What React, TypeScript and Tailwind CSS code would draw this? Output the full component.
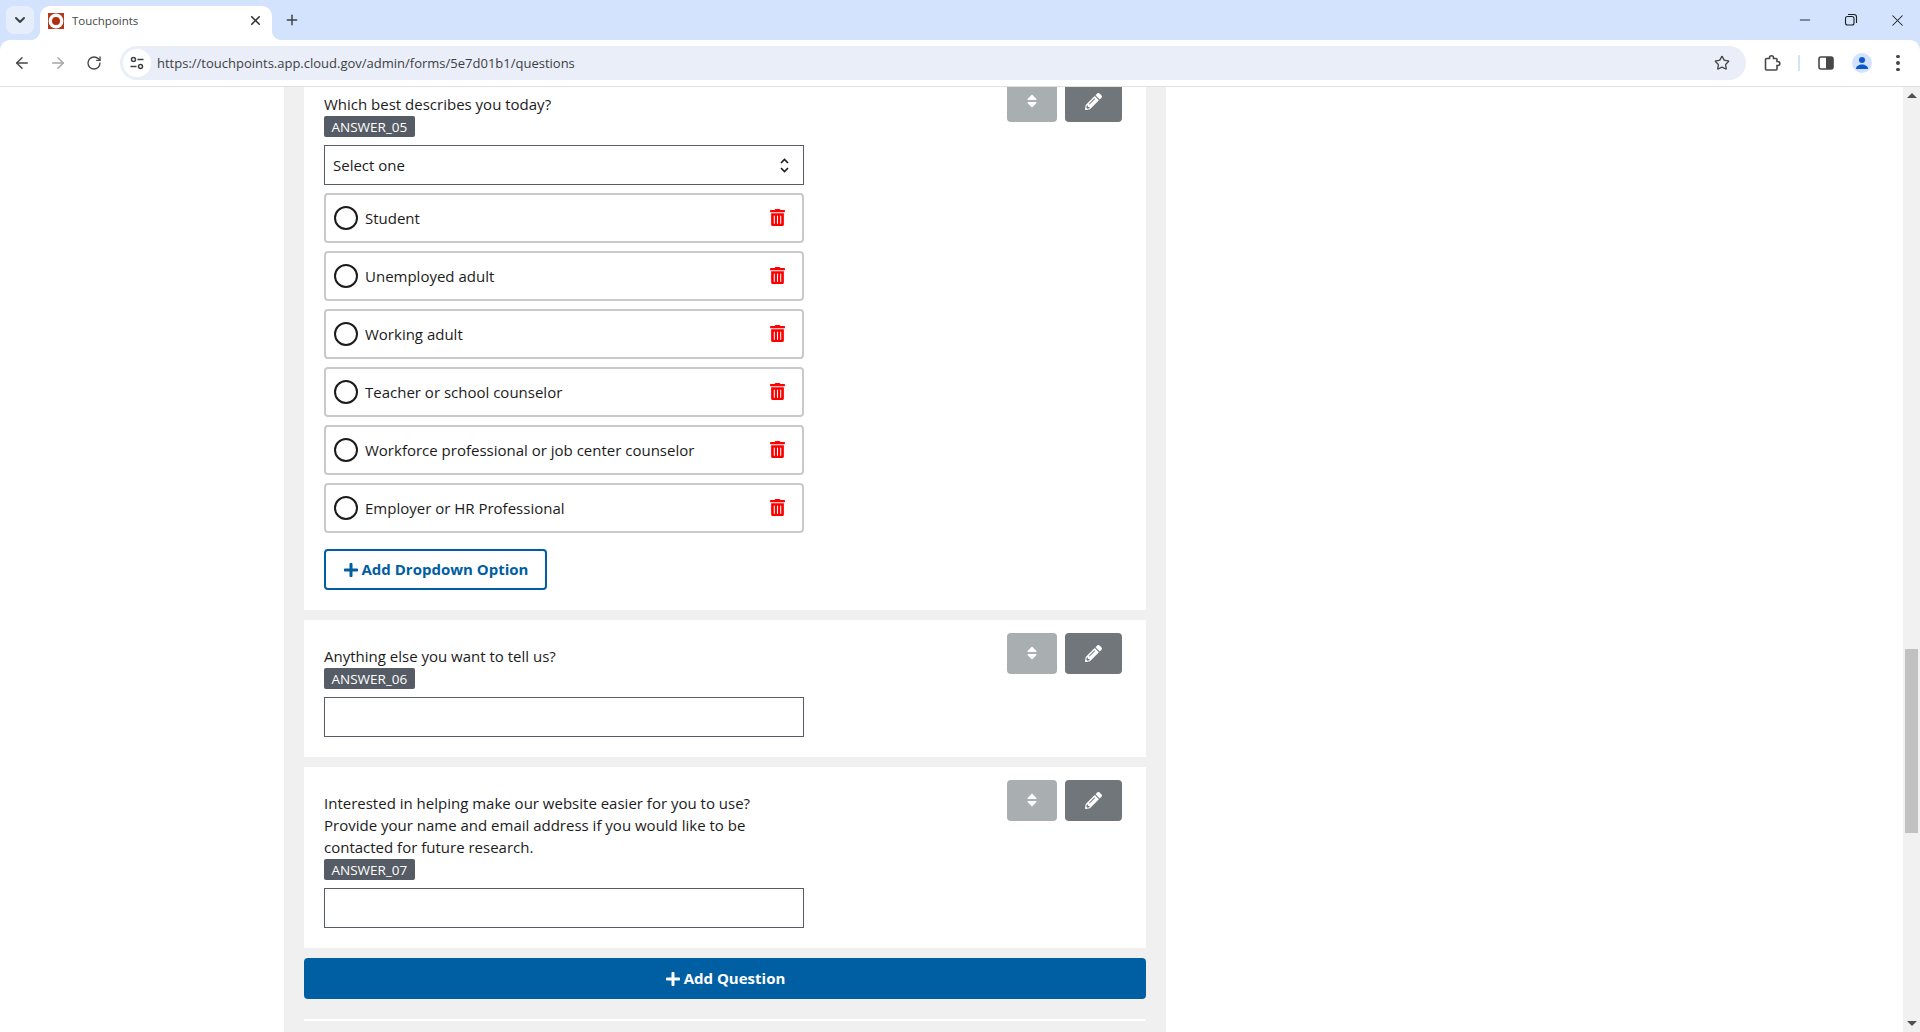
import { ArrowLeft, ArrowRight, ChevronDown, Minus, Plus, RotateCw, Star, X } from "lucide-react"
import { FaPencilAlt, FaPlus, FaSort, FaTrashAlt } from "react-icons/fa"

const options = [
  "Student",
  "Unemployed adult",
  "Working adult",
  "Teacher or school counselor",
  "Workforce professional or job center counselor",
  "Employer or HR Professional",
]

const Favicon = () => (
  <svg width="16" height="16" viewBox="0 0 16 16">
    <rect width="16" height="16" fill="#b5391f" />
    <circle cx="8" cy="8" r="7.4" fill="#fff" />
    <circle cx="8" cy="8" r="4" fill="#b32d10" />
  </svg>
)

const BrowserChrome = () => (
  <div className="bg-[#d3e3fd] font-['Open_Sans',sans-serif]">
    <div className="h-10 flex items-start">
      <div className="ml-[6px] mt-[6px] w-[28px] h-[28px] rounded-lg bg-[#e6eefc] flex items-center justify-center">
        <ChevronDown size={16} strokeWidth={3} className="text-[#3c4043]" />
      </div>
      <div className="relative ml-[6px] mt-[6px] w-[232px] h-[34px] bg-white rounded-t-[10px] flex items-center pl-2 pr-[9px] pb-[5px]">
        <span className="absolute bottom-0 right-full w-[10px] h-[10px] bg-[radial-gradient(circle_at_0_0,transparent_10px,white_10.5px)]" />
        <span className="absolute bottom-0 left-full w-[10px] h-[10px] bg-[radial-gradient(circle_at_100%_0,transparent_10px,white_10.5px)]" />
        <Favicon />
        <span className="ml-2 text-[11.5px] text-[#45474a] flex-1">Touchpoints</span>
        <X size={15} strokeWidth={2.5} className="text-[#2f3135]" />
      </div>
      <div className="ml-[12px] mt-[12px]">
        <Plus size={16} strokeWidth={2.2} className="text-[#3c4043]" />
      </div>
      <div className="ml-auto flex items-center h-10 text-[#1f1f1f]">
        <Minus size={16} strokeWidth={1.4} />
        <svg className="ml-[31px]" width="14" height="14" viewBox="0 0 14 14" fill="none" stroke="currentColor" strokeWidth="1.1">
          <rect x="1.5" y="3.5" width="8.5" height="8.5" rx="2" />
          <path d="M4 1.500h6a2.500 2.500 0 0 1 2.500 2.500v6" />
        </svg>
        <X size={19} strokeWidth={1.3} className="ml-[30px] mr-[13px]" />
      </div>
    </div>
    <div className="h-[47px] bg-white rounded-t-[10px] border-b border-[#e0e0e0] flex items-center text-[#474747]">
      <ArrowLeft size={18} strokeWidth={2} className="ml-[13px]" />
      <ArrowRight size={18} strokeWidth={2} className="ml-[18px] text-[#a6a6a6]" />
      <RotateCw size={16} strokeWidth={2} className="ml-[19px]" />
      <div className="ml-[18px] w-[1626px] h-[34px] rounded-full bg-[#eaeef8] flex items-center pl-[3px] pr-[16px]">
        <div className="w-[28px] h-[28px] rounded-full bg-white flex items-center justify-center">
          <svg width="14" height="14" viewBox="0 0 14 14" fill="none" stroke="#3c4043" strokeWidth="1.5">
            <circle cx="3.5" cy="3.5" r="2" />
            <path d="M7.500 3.500h6M.5 10.500h6" />
            <circle cx="10.5" cy="10.5" r="2" />
          </svg>
        </div>
        <span className="ml-[6px] mt-[1px] text-[13px] text-[#3d4043] flex-1">https://touchpoints.app.cloud.gov/admin/forms/5e7d01b1/questions</span>
        <Star size={16} strokeWidth={2} className="text-[#474747]" />
      </div>
      <svg className="ml-[17px]" width="18" height="18" viewBox="0 0 18 18" fill="none" stroke="#474747" strokeWidth="1.6">
        <path d="M3.500 4.500H6.500V3.800a2 2 0 0 1 4 0V4.500H13a1 1 0 0 1 1 1V7.500h.8a2 2 0 0 1 0 4H14V15a1 1 0 0 1-1 1H3.500a1 1 0 0 1-1-1V5.500a1 1 0 0 1 1-1z" />
      </svg>
      <div className="ml-[17px] w-[2px] h-[16px] bg-[#d3e3fd]" />
      <svg className="ml-[18px]" width="16" height="14" viewBox="0 0 16 14">
        <rect x="1" y="1" width="14" height="12" rx="2" fill="none" stroke="#474747" strokeWidth="1.6" />
        <rect x="8" y="1" width="7" height="12" fill="#474747" />
      </svg>
      <div className="ml-[18px] w-5 h-5 rounded-full bg-[#d3e3fd] flex items-center justify-center">
        <svg width="14" height="14" viewBox="0 0 14 14" fill="#0b57d0">
          <circle cx="7" cy="4" r="3" />
          <path d="M1 13c0-3 3-4.500 6-4.500s6 1.500 6 4.500z" />
        </svg>
      </div>
      <div className="ml-[24px] flex flex-col gap-[3px]">
        <span className="w-[3.5px] h-[3.5px] rounded-full bg-[#474747]" />
        <span className="w-[3.5px] h-[3.5px] rounded-full bg-[#474747]" />
        <span className="w-[3.5px] h-[3.5px] rounded-full bg-[#474747]" />
      </div>
    </div>
  </div>
)

const QuestionActions = () => (
  <div className="flex gap-2 mt-[13px]">
    <button className="w-[50px] h-[41px] rounded bg-[#a9aeb1] text-white flex items-center justify-center">
      <FaSort size={16} className="-mt-[1px]" />
    </button>
    <button className="w-[57px] h-[41px] rounded bg-[#71767a] text-white flex items-center justify-center">
      <FaPencilAlt size={17} className="-mt-[1px]" />
    </button>
  </div>
)

const Badge = ({ name }: { name: string }) => (
  <div className="w-fit h-[21px] px-[7.5px] rounded-[2px] bg-[#565c65] text-white text-[13.5px] font-medium leading-[22px]">{name}</div>
)

const Question = ({ name, title, children }: { name: string; title: React.ReactNode; children?: React.ReactNode }) => (
  <div className="bg-white pl-5 pr-6 pb-5 flex justify-between items-start">
    <div className="w-[480px] pt-[25px]">
      <div className="text-[15px] leading-[22px] mb-[1px]">{title}</div>
      <Badge name={name} />
      {children}
    </div>
    <QuestionActions />
  </div>
)

const TextBox = () => <div className="mt-2 h-10 border border-[#565c65] bg-white" />

export default function App() {
  return (
    <div className="h-[1032px] overflow-hidden flex flex-col bg-white font-['Open_Sans',sans-serif] text-[#1b1b1b]">
      <BrowserChrome />
      <div className="flex-1 flex min-h-0">
        <main className="flex-1 overflow-hidden">
          <div className="ml-[284px] w-[882px] px-5 bg-[#f0f0f0] -mt-[19px] h-[990px]">
            <div className="flex flex-col gap-[10px]">
              <Question name="ANSWER_05" title="Which best describes you today?">
                <div className="mt-2 h-10 border border-[#565c65] bg-white flex items-center justify-between pl-2 pr-[14px] text-[15px]">
                  <span>Select one</span>
                  <svg width="9" height="15" viewBox="0 0 9 15" fill="none" stroke="#1b1b1b" strokeWidth="1.6">
                    <path d="M1 5 4.500 1.500 8 5M1 10l3.500 3.500L8 10" />
                  </svg>
                </div>
                <div className="mt-2 flex flex-col gap-2">
                  {options.map((option) => (
                    <div key={option} className="h-[50px] border-2 border-[#c9c9c9] rounded flex items-center pl-[8px] pr-[16px] text-[15px]">
                      <span className="w-6 h-6 rounded-full border-2 border-[#1b1b1b]" />
                      <span className="ml-[7px] flex-1">{option}</span>
                      <FaTrashAlt size={17} className="text-[#ff0000] -mt-[1px]" />
                    </div>
                  ))}
                </div>
                <button className="mt-4 w-[223px] h-[41px] border-2 border-[#005ea2] rounded text-[#005ea2] font-bold text-[15px] flex items-center justify-center gap-[3px]">
                  <FaPlus size={16} />
                  Add Dropdown Option
                </button>
              </Question>
              <Question name="ANSWER_06" title="Anything else you want to tell us?">
                <TextBox />
              </Question>
              <Question
                name="ANSWER_07"
                title={
                  <>
                    Interested in helping make our website easier for you to use?
                    <br />
                    Provide your name and email address if you would like to be
                    <br />
                    contacted for future research.
                  </>
                }
              >
                <TextBox />
              </Question>
              <button className="h-[41px] rounded bg-[#005ea2] text-white font-bold text-[15px] flex items-center justify-center gap-[3px]">
                <FaPlus size={16} />
                Add Question
              </button>
            </div>
            <div className="mt-5 h-[2px] bg-white" />
          </div>
        </main>
        <div className="w-[17px] bg-[#f1f1f1] flex flex-col items-center justify-between">
          <div className="flex flex-col items-center w-full">
            <div className="mt-[6px] w-0 h-0 border-x-[5px] border-x-transparent border-b-[5px] border-b-[#505050]" />
            <div className="mt-[551px] w-[13px] h-[184px] bg-[#c1c1c1]" />
          </div>
          <div className="mb-[6px] w-0 h-0 border-x-[5px] border-x-transparent border-t-[5px] border-t-[#505050]" />
        </div>
      </div>
    </div>
  )
}
